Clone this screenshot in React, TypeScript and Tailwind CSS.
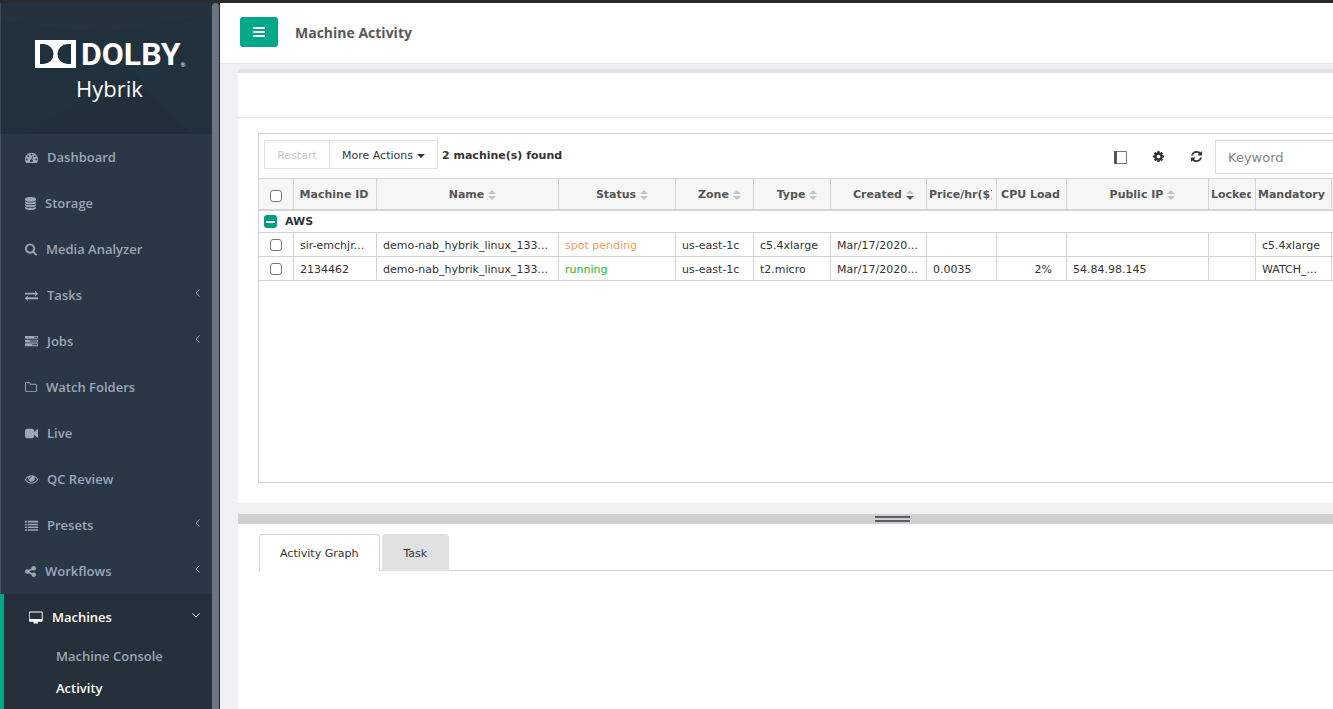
import React, { useState } from 'react';

type Glyph = { width: string; viewBox: string; path: string };

const glyphs: Record<string, Glyph> = {
    dashboard: {
        width: "w-[13px]",
        viewBox: "0 0 1792 1792",
        path: "M384 1152q0-53-37.5-90.5t-90.5-37.5-90.5 37.5-37.5 90.5 37.5 90.5 90.5 37.5 90.5-37.5 37.5-90.5zm192-448q0-53-37.5-90.5t-90.5-37.5-90.5 37.5-37.5 90.5 37.5 90.5 90.5 37.5 90.5-37.5 37.5-90.5zm428 481l101-382q6-26-7.5-48.5t-38.5-29.5-48 6.5-30 39.5l-101 382q-60 5-107 43.5t-63 98.5q-20 77 20 146t117 89 146-20 89-117q16-60-6-117t-72-91zm660-33q0-53-37.5-90.5t-90.5-37.5-90.5 37.5-37.5 90.5 37.5 90.5 90.5 37.5 90.5-37.5 37.5-90.5zm-640-640q0-53-37.5-90.5t-90.5-37.5-90.5 37.5-37.5 90.5 37.5 90.5 90.5 37.5 90.5-37.5 37.5-90.5zm448 192q0-53-37.5-90.5t-90.5-37.5-90.5 37.5-37.5 90.5 37.5 90.5 90.5 37.5 90.5-37.5 37.5-90.5zm320 448q0 261-141 483-19 29-54 29h-1402q-35 0-54-29-141-221-141-483 0-182 71-348t191-286 286-191 348-71 348 71 286 191 191 286 71 348z",
    },
    database: {
        width: "w-[11px]",
        viewBox: "128 0 1536 1792",
        path: "M896 768q237 0 443-43t325-127v170q0 69-103 128t-280 93.5-385 34.5-385-34.5-280-93.5-103-128v-170q119 84 325 127t443 43zm0 768q237 0 443-43t325-127v170q0 69-103 128t-280 93.5-385 34.5-385-34.5-280-93.5-103-128v-170q119 84 325 127t443 43zm0-384q237 0 443-43t325-127v170q0 69-103 128t-280 93.5-385 34.5-385-34.5-280-93.5-103-128v-170q119 84 325 127t443 43zm0-1152q208 0 385 34.5t280 93.5 103 128v128q0 69-103 128t-280 93.5-385 34.5-385-34.5-280-93.5-103-128v-128q0-69 103-128t280-93.5 385-34.5z",
    },
    search: {
        width: "w-[12px]",
        viewBox: "64 64 1664 1792",
        path: "M1216 832q0-185-131.5-316.5t-316.5-131.5-316.5 131.5-131.5 316.5 131.5 316.5 316.5 131.5 316.5-131.5 131.5-316.5zm512 832q0 52-38 90t-90 38q-54 0-90-38l-343-342q-179 124-399 124-143 0-273.5-55.5t-225-150-150-225-55.5-273.5 55.5-273.5 150-225 225-150 273.5-55.5 273.5 55.5 225 150 150 225 55.5 273.5q0 220-124 399l343 343q37 37 37 90z",
    },
    exchange: {
        width: "w-[13px]",
        viewBox: "0 0 1792 1792",
        path: "M1792 1184v192q0 13-9.5 22.5t-22.5 9.5h-1376v192q0 13-9.5 22.5t-22.5 9.5q-12 0-24-10l-319-320q-9-9-9-22 0-14 9-23l320-320q9-9 23-9 13 0 22.5 9.5t9.5 22.5v192h1376q13 0 22.5 9.5t9.5 22.5zm0-544q0 14-9 23l-320 320q-9 9-23 9-13 0-22.5-9.5t-9.5-22.5v-192h-1376q-13 0-22.5-9.5t-9.5-22.5v-192q0-13 9.5-22.5t22.5-9.5h1376v-192q0-14 9-23t23-9q12 0 24 10l319 319q9 9 9 23z",
    },
    tasks: {
        width: "w-[13px]",
        viewBox: "0 0 1792 1792",
        path: "M1024 1408h640v-128h-640v128zm-384-512h1024v-128h-1024v128zm640-512h384v-128h-384v128zm512 832v256q0 26-19 45t-45 19h-1664q-26 0-45-19t-19-45v-256q0-26 19-45t45-19h1664q26 0 45 19t19 45zm0-512v256q0 26-19 45t-45 19h-1664q-26 0-45-19t-19-45v-256q0-26 19-45t45-19h1664q26 0 45 19t19 45zm0-512v256q0 26-19 45t-45 19h-1664q-26 0-45-19t-19-45v-256q0-26 19-45t45-19h1664q26 0 45 19t19 45z",
    },
    folder: {
        width: "w-[12px]",
        viewBox: "64 0 1664 1792",
        path: "M1600 1312v-704q0-40-28-68t-68-28h-704q-40 0-68-28t-28-68v-64q0-40-28-68t-68-28h-320q-40 0-68 28t-28 68v960q0 40 28 68t68 28h1216q40 0 68-28t28-68zm128-704v704q0 92-66 158t-158 66h-1216q-92 0-158-66t-66-158v-960q0-92 66-158t158-66h320q92 0 158 66t66 158v32h672q92 0 158 66t66 158z",
    },
    video: {
        width: "w-[13px]",
        viewBox: "0 0 1792 1792",
        path: "M1792 352v1088q0 42-39 59-13 5-25 5-27 0-45-19l-403-403v166q0 119-84.5 203.5t-203.5 84.5h-704q-119 0-203.5-84.5t-84.5-203.5v-704q0-119 84.5-203.5t203.5-84.5h704q119 0 203.5 84.5t84.5 203.5v165l403-402q18-19 45-19 12 0 25 5 39 17 39 59z",
    },
    eye: {
        width: "w-[13px]",
        viewBox: "0 64 1792 1792",
        path: "M1664 960q-152-236-381-353 61 104 61 225 0 185-131.5 316.5t-316.5 131.5-316.5-131.5-131.5-316.5q0-121 61-225-229 117-381 353 133 205 333.5 326.5t434.5 121.5 434.5-121.5 333.5-326.5zm-720-384q0-20-14-34t-34-14q-125 0-214.5 89.5t-89.5 214.5q0 20 14 34t34 14 34-14 14-34q0-86 61-147t147-61q20 0 34-14t14-34zm848 384q0 34-20 69-140 230-376.5 368.5t-499.5 138.5-499.5-139-376.5-368q-20-35-20-69t20-69q140-229 376.5-368t499.5-139 499.5 139 376.5 368q20 35 20 69z",
    },
    list: {
        width: "w-[13px]",
        viewBox: "0 0 1792 1792",
        path: "M0 256h256v224h-256zM384 256h1408v224h-1408zM0 640h256v224h-256zM384 640h1408v224h-1408zM0 1024h256v224h-256zM384 1024h1408v224h-1408zM0 1408h256v224h-256zM384 1408h1408v224h-1408z",
    },
    share: {
        width: "w-[11px]",
        viewBox: "128 0 1536 1792",
        path: "M1344 1024q133 0 226.5 93.5t93.5 226.5-93.5 226.5-226.5 93.5-226.5-93.5-93.5-226.5q0-12 2-34l-360-180q-92 86-218 86-133 0-226.5-93.5t-93.5-226.5 93.5-226.5 226.5-93.5q126 0 218 86l360-180q-2-22-2-34 0-133 93.5-226.5t226.5-93.5 226.5 93.5 93.5 226.5-93.5 226.5-226.5 93.5q-126 0-218-86l-360 180q2 22 2 34t-2 34l360 180q92-86 218-86z",
    },
    desktop: {
        width: "w-[14px]",
        viewBox: "0 -64 1856 1792",
        path: "M1728 992v-832q0-13-9.5-22.5t-22.5-9.5h-1600q-13 0-22.5 9.5t-9.5 22.5v832q0 13 9.5 22.5t22.5 9.5h1600q13 0 22.5-9.5t9.5-22.5zm128-832v1088q0 66-47 113t-113 47h-544q0 37 16 77.5t32 71 16 43.5q0 26-19 45t-45 19h-512q-26 0-45-19t-19-45q0-14 16-44t32-70 16-78h-544q-66 0-113-47t-47-113v-1088q0-66 47-113t113-47h1600q66 0 113 47t47 113z",
    },
    cog: {
        width: "w-[13px]",
        viewBox: "0 0 1792 1792",
        path: "M1152 896q0-106-75-181t-181-75-181 75-75 181 75 181 181 75 181-75 75-181zm512-109v222q0 12-8 23t-20 13l-185 28q-19 54-39 91 35 50 107 138 10 12 10 25t-9 23q-27 37-99 108t-94 71q-12 0-26-9l-138-108q-44 23-91 38-16 136-29 186-7 28-36 28h-222q-14 0-24.5-8.5t-11.5-21.5l-28-184q-49-16-90-37l-141 107q-10 9-25 9-14 0-25-11-126-114-165-168-7-10-7-23 0-12 8-23 15-21 51-66.5t54-70.5q-27-50-41-99l-183-27q-13-2-21-12.5t-8-23.5v-222q0-12 8-23t19-13l186-28q14-46 39-92-40-57-107-138-10-12-10-24 0-10 9-23 26-36 98.5-107.5t94.5-71.5q13 0 26 10l138 107q44-23 91-38 16-136 29-186 7-28 36-28h222q14 0 24.5 8.5t11.5 21.5l28 184q49 16 90 37l142-107q9-9 24-9 13 0 25 10 129 119 165 170 7 8 7 22 0 12-8 23-15 21-51 66.5t-54 70.5q26 50 41 98l183 28q13 2 21 12.5t8 23.5z",
    },
    refresh: {
        width: "w-[13px]",
        viewBox: "0 0 1792 1792",
        path: "M1639 1056q0 5-1 7-64 268-268 434.5t-478 166.5q-146 0-282.5-55t-243.5-157l-129 129q-19 19-45 19t-45-19-19-45v-448q0-26 19-45t45-19h448q26 0 45 19t19 45-19 45l-137 137q71 66 161 102t187 36q134 0 250-65t186-179q11-17 53-117 8-23 30-23h192q13 0 22.5 9.5t9.5 22.5zm25-800v448q0 26-19 45t-45 19h-448q-26 0-45-19t-19-45 19-45l138-138q-148-137-349-137-134 0-250 65t-186 179q-11 17-53 117-8 23-30 23h-199q-13 0-22.5-9.5t-9.5-22.5v-7q65-268 270-434.5t480-166.5q146 0 284 55.5t245 156.5l130-129q19-19 45-19t45 19 19 45z",
    },
};

const menu = [
    { label: "Dashboard", icon: "dashboard" },
    { label: "Storage", icon: "database" },
    { label: "Media Analyzer", icon: "search" },
    { label: "Tasks", icon: "exchange", nested: true },
    { label: "Jobs", icon: "tasks", nested: true },
    { label: "Watch Folders", icon: "folder" },
    { label: "Live", icon: "video" },
    { label: "QC Review", icon: "eye" },
    { label: "Presets", icon: "list", nested: true },
    { label: "Workflows", icon: "share", nested: true },
];

const columns = [
    { label: "Machine ID", width: "w-[83px]" },
    { label: "Name", width: "w-[182px]", sort: "none" },
    { label: "Status", width: "w-[117px]", sort: "none" },
    { label: "Zone", width: "w-[78px]", sort: "none" },
    { label: "Type", width: "w-[77px]", sort: "none" },
    { label: "Created", width: "w-[96px]", sort: "desc" },
    { label: "Price/hr($)", width: "w-[70px]", clip: true },
    { label: "CPU Load", width: "w-[70px]" },
    { label: "Public IP", width: "w-[142px]", sort: "none" },
    { label: "Locked", width: "w-[47px]", clip: true },
    { label: "Mandatory", width: "w-[76px]", clip: true },
];

const machines = [
    {
        id: "sir-emchjr...",
        name: "demo-nab_hybrik_linux_133...",
        status: "spot pending",
        color: "text-[#f0a05a]",
        zone: "us-east-1c",
        type: "c5.4xlarge",
        created: "Mar/17/2020...",
        price: "",
        cpu: "",
        ip: "",
        mandatory: "c5.4xlarge",
    },
    {
        id: "2134462",
        name: "demo-nab_hybrik_linux_133...",
        status: "running",
        color: "text-[#22b52c]",
        zone: "us-east-1c",
        type: "t2.micro",
        created: "Mar/17/2020...",
        price: "0.0035",
        cpu: "2%",
        ip: "54.84.98.145",
        mandatory: "WATCH_...",
    },
];

const checkbox = "block size-3 appearance-none rounded-[3px] border border-[#767676] bg-white checked:bg-[#00a887]";
const cell = "h-6 overflow-hidden border-r border-b border-[#d3d3d3] px-[6px] pt-[2px] whitespace-nowrap";

function Icon({ name }: { name: string }) {
    const glyph = glyphs[name];
    return (
        <svg viewBox={glyph.viewBox} fill="currentColor" className={`h-[13px] shrink-0 ${glyph.width}`} aria-hidden="true">
            <path d={glyph.path} />
        </svg>
    );
}

function SortArrows({ sort }: { sort: string }) {
    return (
        <svg viewBox="0 0 8 10" className="h-[10px] w-2 shrink-0" aria-hidden="true">
            <path d="M4 0 8 4H0z" fill="#c4c4c4" />
            <path d="M0 6h8L4 10z" fill={sort === "desc" ? "#5a5a5a" : "#c4c4c4"} />
        </svg>
    );
}

function Logo() {
    return (
        <div className="relative h-[131px] overflow-hidden border-l border-[#3a4a57] bg-[#21303d] font-normal text-white">
            <svg viewBox="0 0 212 131" preserveAspectRatio="none" className="absolute inset-0 size-full" aria-hidden="true">
                <path d="M0 0h212v12L105 30 0 18z" fill="#23323e" />
                <path d="M105 30 212 12v119h-20L130 68z" fill="#22313e" />
                <path d="M130 68 192 131H25z" fill="#202f3b" />
            </svg>
            <div className="relative flex flex-col pt-[33px] pl-[34px]">
                <div className="flex h-9 items-center">
                    <svg viewBox="0 0 41 28" className="h-7 w-[41px] shrink-0" aria-hidden="true">
                        <path fillRule="evenodd" fill="#fff" d="M0 0h41v28H0zM5 4v20h3.500a10 10 0 0 0 0-20zM36 4v20h-3.500a10 10 0 0 1 0-20z" />
                    </svg>
                    <span className="pl-[5px] font-[family-name:Roboto,sans-serif] text-[32px] leading-9 font-bold">DOLBY</span>
                    <span className="self-end pb-[3px] text-[6px] leading-[8px]">®</span>
                </div>
                <span className="pl-[41px] text-[22px] leading-8">Hybrik</span>
            </div>
        </div>
    );
}

function Sidebar() {
    return (
        <aside className="flex w-[220px] shrink-0 overflow-hidden border-r border-[#1f2b38] bg-[#293746] font-['Open_Sans',sans-serif] text-[13px] font-semibold text-[#9ca7b8]">
            <div className="flex min-w-0 flex-1 flex-col">
                <Logo />
                <nav className="flex flex-1 flex-col">
                    {menu.map((item) => (
                        <a key={item.label} href="#" className="flex h-[46px] shrink-0 items-center gap-[9px] border-l border-[#465463] pr-3 pl-6">
                            <Icon name={item.icon} />
                            <span className="pt-[2px]">{item.label}</span>
                            {item.nested && (
                                <svg viewBox="0 0 5 8" className="mb-1 ml-auto h-2 w-[5px]" fill="none" stroke="currentColor" aria-hidden="true">
                                    <path d="M4.500 .5 1 4l3.500 3.500" />
                                </svg>
                            )}
                        </a>
                    ))}
                    <div className="flex-1 border-l-4 border-[#00a887] bg-[#25303b]">
                        <a href="#" className="flex h-[46px] items-center gap-[9px] pr-3 pl-[25px] text-white">
                            <Icon name="desktop" />
                            <span className="pt-[2px]">Machines</span>
                            <svg viewBox="0 0 8 5" className="mb-1 ml-auto h-[5px] w-2" fill="none" stroke="currentColor" aria-hidden="true">
                                <path d="M.5 .5 4 4 7.500 .5" />
                            </svg>
                        </a>
                        <a href="#" className="flex h-8 items-center pt-[2px] pl-[52px]">Machine Console</a>
                        <a href="#" className="flex h-8 items-center pt-[2px] pl-[52px] text-white">Activity</a>
                    </div>
                </nav>
            </div>
            <div className="w-[7px] rounded-t-[4px] bg-[#6b757f]" />
        </aside>
    );
}

function Toolbar({ keyword, onKeyword }: { keyword: string; onKeyword: (value: string) => void }) {
    return (
        <div className="flex h-11 items-start pt-[6px] pl-[5px] text-[#333]">
            <button disabled className="h-[29px] w-[66px] border border-[#e2e2e2] pt-[3px] text-[#c9c9c9]">Restart</button>
            <button className="-ml-px flex h-[29px] w-[109px] items-center justify-center gap-1 border border-[#e2e2e2] pt-[3px]">
                More Actions
                <svg viewBox="0 0 8 4" className="h-1 w-2" fill="currentColor" aria-hidden="true">
                    <path d="M0 0h8L4 4z" />
                </svg>
            </button>
            <span className="ml-1 pt-px leading-[29px] font-bold">2 machine(s) found</span>
            <div className="ml-auto flex">
                <button aria-label="Toggle panel" className="flex h-[34px] w-[38px] items-center justify-center">
                    <svg viewBox="0 0 13 13" className="size-[13px]" aria-hidden="true">
                        <path d="M.5 .5h12v12H.5z" fill="#fff" stroke="#777" />
                        <path d="M0 0h3v13H0z" fill="#555" />
                    </svg>
                </button>
                <button aria-label="Settings" className="flex h-[34px] w-[38px] items-center justify-center pb-[2px]">
                    <Icon name="cog" />
                </button>
                <button aria-label="Refresh" className="flex h-[34px] w-[38px] items-center justify-center pb-[2px]">
                    <Icon name="refresh" />
                </button>
                <input
                    aria-label="Keyword"
                    placeholder="Keyword"
                    value={keyword}
                    onChange={(e) => onKeyword(e.target.value)}
                    className="h-[34px] w-[118px] border border-r-0 border-[#dcdcdc] px-3 text-[13px] outline-none placeholder:text-[#858585]"
                />
            </div>
        </div>
    );
}

function MachineTable() {
    return (
        <table className="w-full table-fixed border-separate border-spacing-0 text-left text-[#333]">
            <thead>
                <tr className="bg-[#f6f6f6] text-[#555]">
                    <th className="h-[33px] w-[35px] border-t border-r border-b-2 border-[#d3d3d3] pt-[3px] pl-[11px]">
                        <input type="checkbox" aria-label="Select all machines" className={checkbox} />
                    </th>
                    {columns.map((column) => (
                        <th key={column.label} className={`border-t border-r border-b-2 border-[#d3d3d3] pt-[2px] pr-1 pl-[2px] ${column.width}`}>
                            <div className={`flex items-center gap-1 overflow-hidden whitespace-nowrap ${column.clip ? "" : "justify-center"} ${column.sort ? "pl-3" : ""}`}>
                                {column.label}
                                {column.sort && <SortArrows sort={column.sort} />}
                            </div>
                        </th>
                    ))}
                    <th className="border-t border-b-2 border-[#d3d3d3]" />
                </tr>
            </thead>
            <tbody>
                <tr>
                    <th colSpan={13} className="h-[22px] border-b border-[#d3d3d3] pl-[5px]">
                        <div className="flex items-center gap-2">
                            <button aria-label="Collapse AWS" className="flex size-[13px] items-center justify-center rounded-[3px] bg-[#009c7d]">
                                <span className="h-[2px] w-[9px] bg-white" />
                            </button>
                            <span className="pt-px">AWS</span>
                        </div>
                    </th>
                </tr>
                {machines.map((machine) => (
                    <tr key={machine.id}>
                        <td className="border-r border-b border-[#d3d3d3] pl-[11px]">
                            <input type="checkbox" aria-label={"Select " + machine.id} className={checkbox} />
                        </td>
                        <td className={cell}>{machine.id}</td>
                        <td className={cell}>{machine.name}</td>
                        <td className={`${cell} ${machine.color}`}>{machine.status}</td>
                        <td className={cell}>{machine.zone}</td>
                        <td className={cell}>{machine.type}</td>
                        <td className={cell}>{machine.created}</td>
                        <td className={cell}>{machine.price}</td>
                        <td className="h-6 border-r border-b border-[#d3d3d3] pt-[2px] pr-[14px] text-right">{machine.cpu}</td>
                        <td className={cell}>{machine.ip}</td>
                        <td className={cell}></td>
                        <td className={cell}>{machine.mandatory}</td>
                        <td className="border-b border-[#d3d3d3]"></td>
                    </tr>
                ))}
            </tbody>
        </table>
    );
}

export default function App() {
    const [keyword, setKeyword] = useState("");
    const [tab, setTab] = useState("Activity Graph");

    return (
        <div className="flex h-screen flex-col overflow-hidden bg-[#f0f0f2]">
            <div className="h-[3px] shrink-0 bg-[#2b2a2d]" />
            <div className="flex min-h-0 flex-1">
                <Sidebar />
                <main className="flex min-w-0 flex-1 flex-col font-['DejaVu_Sans',Verdana,sans-serif] text-[11px] leading-4">
                    <header className="flex h-[61px] shrink-0 items-center gap-[17px] border-b border-[#e3e4e8] bg-white pb-[2px] pl-5">
                        <button aria-label="Toggle menu" className="flex h-[30px] w-[38px] items-center justify-center rounded-[3px] bg-[#00a887]">
                            <svg viewBox="0 0 12 10" className="h-[10px] w-3" fill="#fff" aria-hidden="true">
                                <path d="M0 0h12v2H0zM0 4h12v2H0zM0 8h12v2H0z" />
                            </svg>
                        </button>
                        <h1 className="pt-[2px] font-['Open_Sans',sans-serif] text-[14px] font-bold text-[#58595b]">Machine Activity</h1>
                    </header>
                    <section className="mt-[5px] ml-[18px] shrink-0 border-t-4 border-[#e2e3e7] bg-white">
                        <div className="h-[45px] border-b border-[#e4e5e8]" />
                        <div className="pt-[15px] pb-5 pl-5">
                            <div className="h-[350px] overflow-hidden border-y border-l border-[#d3d3d3]">
                                <Toolbar keyword={keyword} onKeyword={setKeyword} />
                                <MachineTable />
                            </div>
                        </div>
                    </section>
                    <div className="mt-[11px] ml-[18px] flex h-[10px] shrink-0 items-center justify-center bg-[#d0d0d0] pl-[214px]">
                        <div className="h-[6px] w-[35px] border-y-2 border-[#5c5d60]" />
                    </div>
                    <section className="ml-[18px] flex-1 bg-white pt-[10px] pl-5">
                        <div role="tablist" className="flex gap-[2px] border-b border-[#d3d3d3] pl-px">
                            {["Activity Graph", "Task"].map((label) => (
                                <button
                                    key={label}
                                    role="tab"
                                    aria-selected={tab === label}
                                    onClick={() => setTab(label)}
                                    className={`-mb-px h-[37px] rounded-t-[4px] border border-b-0 pt-px pr-[21px] pl-5 text-[#333] ${tab === label ? "border-[#d3d3d3] bg-white" : "border-[#e1e1e1] bg-[#e1e1e1]"}`}
                                >
                                    {label}
                                </button>
                            ))}
                        </div>
                    </section>
                </main>
            </div>
        </div>
    );
}
